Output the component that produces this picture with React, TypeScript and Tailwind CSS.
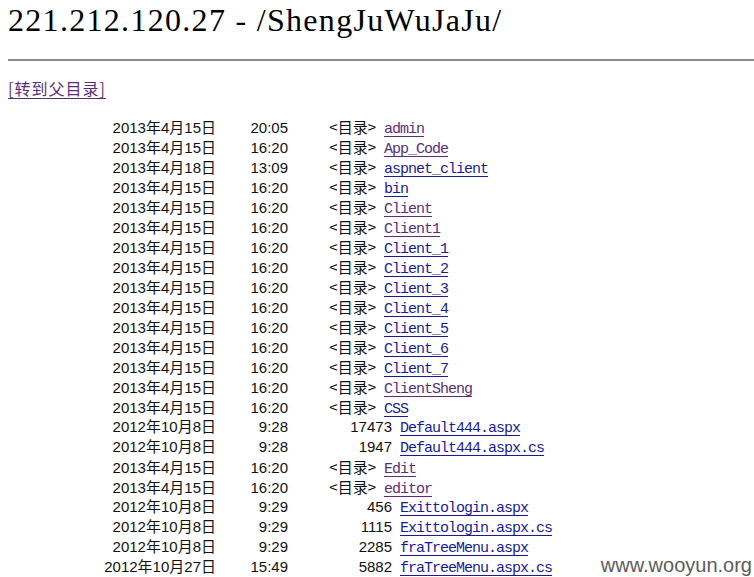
import React from "react";

type Row = { d: string; t: string; dir?: boolean; size?: string; name: string; v?: boolean };

const rows: Row[] = [
  { d: "2013年4月15日", t: "20:05", dir: true, name: "admin", v: true },
  { d: "2013年4月15日", t: "16:20", dir: true, name: "App_Code", v: true },
  { d: "2013年4月18日", t: "13:09", dir: true, name: "aspnet_client" },
  { d: "2013年4月15日", t: "16:20", dir: true, name: "bin" },
  { d: "2013年4月15日", t: "16:20", dir: true, name: "Client", v: true },
  { d: "2013年4月15日", t: "16:20", dir: true, name: "Client1", v: true },
  { d: "2013年4月15日", t: "16:20", dir: true, name: "Client_1" },
  { d: "2013年4月15日", t: "16:20", dir: true, name: "Client_2" },
  { d: "2013年4月15日", t: "16:20", dir: true, name: "Client_3" },
  { d: "2013年4月15日", t: "16:20", dir: true, name: "Client_4" },
  { d: "2013年4月15日", t: "16:20", dir: true, name: "Client_5" },
  { d: "2013年4月15日", t: "16:20", dir: true, name: "Client_6" },
  { d: "2013年4月15日", t: "16:20", dir: true, name: "Client_7" },
  { d: "2013年4月15日", t: "16:20", dir: true, name: "ClientSheng", v: true },
  { d: "2013年4月15日", t: "16:20", dir: true, name: "CSS" },
  { d: "2012年10月8日", t: "9:28", size: "17473", name: "Default444.aspx" },
  { d: "2012年10月8日", t: "9:28", size: "1947", name: "Default444.aspx.cs" },
  { d: "2013年4月15日", t: "16:20", dir: true, name: "Edit", v: true },
  { d: "2013年4月15日", t: "16:20", dir: true, name: "editor", v: true },
  { d: "2012年10月8日", t: "9:29", size: "456", name: "Exittologin.aspx" },
  { d: "2012年10月8日", t: "9:29", size: "1115", name: "Exittologin.aspx.cs" },
  { d: "2012年10月8日", t: "9:29", size: "2285", name: "fraTreeMenu.aspx" },
  { d: "2012年10月27日", t: "15:49", size: "5882", name: "fraTreeMenu.aspx.cs" },
];

const sans = "font-['Liberation_Sans','Noto_Sans_CJK_SC',sans-serif]";

function Name({ r }: { r: Row }) {
  return (
    <a
      href="#"
      className={
        "ml-2 font-['Liberation_Mono',monospace] text-[15px] tracking-[-1px] underline underline-offset-[3px] " +
        (r.v ? "text-[#5a2d7a] decoration-[#5a2d7a]" : "text-[#1a1a99] decoration-[#1a1a99]")
      }
    >
      {r.name}
    </a>
  );
}

export default function App() {
  return (
    <div className="relative w-[754px] h-[577px] overflow-hidden bg-white text-black">
      <h1 className="h-[40px] pl-2 font-['Liberation_Serif',serif] text-[32px] font-normal leading-[40px] tracking-[1.3px] whitespace-nowrap">
        221.212.120.27 - /ShengJuWuJaJu/
      </h1>
      <div className="ml-2 mt-[19px] h-0 border-t-2 border-[#8a8a8a]" />
      <div className="pt-[17px]">
        <div className="h-[20px] pl-2 leading-[20px]">
          <a
            href="#"
            className="font-['Noto_Sans_CJK_SC',sans-serif] text-[16px] tracking-[1px] text-[#5a2d7a] underline decoration-[#5a2d7a] underline-offset-[3px]"
          >
            [转到父目录]
          </a>
        </div>
        <div className="mt-[19px] flex flex-col">
          {rows.map((r, i) => (
            <div key={i} className={"flex h-[20px] items-baseline whitespace-nowrap leading-[20px] text-[15px] text-[#111] " + sans}>
              <span className="w-[216px] text-right">{r.d}</span>
              <span className="w-[72px] text-right">{r.t}</span>
              {r.dir ? (
                <>
                  <span className="w-[88px] text-right font-['Noto_Sans_CJK_SC',sans-serif]">&lt;目录&gt;</span>
                  <Name r={r} />
                </>
              ) : (
                <>
                  <span className="w-[104px] text-right">{r.size}</span>
                  <Name r={r} />
                </>
              )}
            </div>
          ))}
        </div>
      </div>
      <div className="absolute right-[2px] top-[553px] font-['Liberation_Sans',sans-serif] text-[20px] leading-[24px] text-[#5c5c5c]">
        www.wooyun.org
      </div>
    </div>
  );
}
